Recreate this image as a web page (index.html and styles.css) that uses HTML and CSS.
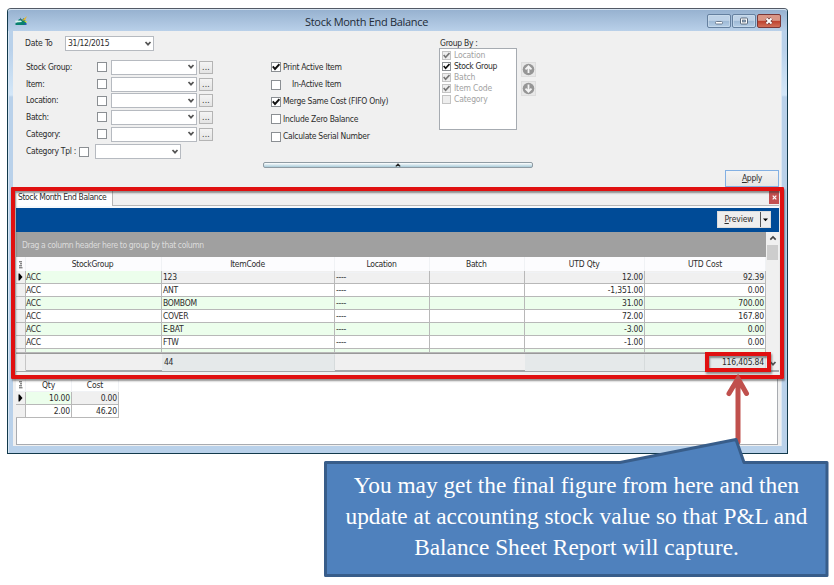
FILE: index.html
```html
<!DOCTYPE html>
<html lang="en">
<head>
<meta charset="utf-8">
<title>Stock Month End Balance</title>
<link rel="stylesheet" href="styles.css">
</head>
<body>
<svg width="0" height="0" class="defs">
  <symbol id="chev" viewBox="0 0 8 6"><path d="M1.5 1 4 3.700 6.500 1" fill="none" stroke="#555" stroke-width="1.700"/></symbol>
  <symbol id="tick" viewBox="0 0 8 8"><path d="M.8 3.4 3 6 7.4 1.2" fill="none" stroke="currentColor" stroke-width="1.9"/></symbol>
  <symbol id="cols" viewBox="0 0 5 8"><path d="M1 .8h3M2 2.800h2M1 4.800h3M1 6.800h3.500" stroke="#555" stroke-width="1"/></symbol>
  <symbol id="cur" viewBox="0 0 5 8"><path d="M.5.5h1L4.500 4l-3 3.500h-1z" fill="#000"/></symbol>
</svg>
<main class="window">
  <header class="titlebar">
    <svg class="app" viewBox="0 0 13 10"><path d="M0 8 3 5 4 3 7 4 9 2l2 4v3H1z" fill="#08806e"/><path d="M0 4.800l6-.3 1 1.500-6 .5z" fill="#d8f3ee"/><path d="M5 1.500 7 4 5.500 4z" fill="#1e4b50"/><path d="M7 4.500 12 0 10 4.500z" fill="#e8b52c"/><path d="M9 5h2.500v2z" fill="#d8dd28"/><path d="M9.500 7h2v2h-2z" fill="#285bb0"/></svg>
    <h1>Stock Month End Balance</h1>
    <div class="winbtns">
      <span class="wb"><svg viewBox="0 0 22 12"><rect x="7.5" y="6.5" width="7" height="2.500" rx="1" fill="#fff" stroke="#6c7c90"/></svg></span>
      <span class="wb"><svg viewBox="0 0 22 12"><rect x="7.5" y="3" width="7" height="6" rx="1" fill="#fff" stroke="#58687a"/><rect x="9.5" y="5" width="3" height="2" fill="#8fa7c2" stroke="#58687a" stroke-width=".7"/></svg></span>
      <span class="wb red"><svg viewBox="0 0 22 12"><path d="M8.500 3.500l5 5m0-5-5 5" stroke="#6d3a3a" stroke-width="3.400"/><path d="M8.500 3.500l5 5m0-5-5 5" stroke="#fff" stroke-width="1.900"/></svg></span>
    </div>
  </header>
  <div class="client">
    <section class="form">
      <div class="filters">
        <div class="row date"><label>Date To</label><span class="combo">31/12/2015<svg><use href="#chev"/></svg></span></div>
        <div class="row"><label>Stock Group:</label><i class="cb"></i><span class="combo"><svg><use href="#chev"/></svg></span><button>...</button></div>
        <div class="row"><label>Item:</label><i class="cb"></i><span class="combo"><svg><use href="#chev"/></svg></span><button>...</button></div>
        <div class="row"><label>Location:</label><i class="cb"></i><span class="combo"><svg><use href="#chev"/></svg></span><button>...</button></div>
        <div class="row"><label>Batch:</label><i class="cb"></i><span class="combo"><svg><use href="#chev"/></svg></span><button>...</button></div>
        <div class="row"><label>Category:</label><i class="cb"></i><span class="combo"><svg><use href="#chev"/></svg></span><button>...</button></div>
        <div class="row tpl"><label>Category Tpl :</label><i class="cb"></i><span class="combo"><svg><use href="#chev"/></svg></span></div>
      </div>
      <div class="options">
        <div class="opt"><i class="cb"><svg><use href="#tick"/></svg></i>Print Active Item</div>
        <div class="opt ina"><i class="cb"></i>In-Active Item</div>
        <div class="opt"><i class="cb"><svg><use href="#tick"/></svg></i>Merge Same Cost (FIFO Only)</div>
        <div class="opt"><i class="cb"></i>Include Zero Balance</div>
        <div class="opt"><i class="cb"></i>Calculate Serial Number</div>
      </div>
      <div class="groupby">
        <div class="gl">Group By :</div>
        <div class="list">
          <div class="gi off"><i class="cb"><svg><use href="#tick"/></svg></i>Location</div>
          <div class="gi"><i class="cb"><svg><use href="#tick"/></svg></i>Stock Group</div>
          <div class="gi off"><i class="cb"><svg><use href="#tick"/></svg></i>Batch</div>
          <div class="gi off"><i class="cb"><svg><use href="#tick"/></svg></i>Item Code</div>
          <div class="gi off"><i class="cb"></i>Category</div>
        </div>
      </div>
      <div class="movers">
        <span><svg viewBox="0 0 13 13"><circle cx="6.5" cy="6.5" r="5.8" fill="#969696"/><path d="M6.5 10V3.500M3.500 6.300l3-3 3 3" fill="none" stroke="#f4f4f4" stroke-width="1.800"/></svg></span>
        <span><svg viewBox="0 0 13 13"><circle cx="6.5" cy="6.5" r="5.8" fill="#969696"/><path d="M6.5 2.500v7M3.500 6.700l3 3 3-3" fill="none" stroke="#f4f4f4" stroke-width="1.800"/></svg></span>
      </div>
    </section>
    <div class="collapser"><svg viewBox="0 0 6 4"><path d="M.8 3.4 3 1.2 5.2 3.4" fill="none" stroke="#222" stroke-width="1.3"/></svg></div>
    <div class="applyrow"><button class="apply"><u>A</u>pply</button></div>
    <section class="report">
      <div class="tabs"><span class="tab">Stock Month End Balance</span><span class="close"><svg viewBox="0 0 5 5"><path d="M.7.7l3.6 3.6m0-3.6L.7 4.3" stroke="#fff" stroke-width="1.2"/></svg></span></div>
      <div class="bar"><button class="preview"><span><u>P</u>review</span><b><svg viewBox="0 0 6 4"><path d="M0 .3h6L3 3.6z"/></svg></b></button></div>
      <div class="gridwrap">
        <div class="gridmain">
          <div class="grouphint">Drag a column header here to group by that column</div>
          <div class="grid">
            <div class="r head"><span><svg><use href="#cols"/></svg></span><span>StockGroup</span><span>ItemCode</span><span>Location</span><span>Batch</span><span>UTD Qty</span><span>UTD Cost</span></div>
            <div class="r cur"><span><svg><use href="#cur"/></svg></span><span>ACC</span><span>123</span><span>----</span><span></span><span>12.00</span><span>92.39</span></div>
            <div class="r"><span></span><span>ACC</span><span>ANT</span><span>----</span><span></span><span>-1,351.00</span><span>0.00</span></div>
            <div class="r g"><span></span><span>ACC</span><span>BOMBOM</span><span>----</span><span></span><span>31.00</span><span>700.00</span></div>
            <div class="r"><span></span><span>ACC</span><span>COVER</span><span>----</span><span></span><span>72.00</span><span>167.80</span></div>
            <div class="r g"><span></span><span>ACC</span><span>E-BAT</span><span>----</span><span></span><span>-3.00</span><span>0.00</span></div>
            <div class="r"><span></span><span>ACC</span><span>FTW</span><span>----</span><span></span><span>-1.00</span><span>0.00</span></div>
            <div class="r g part"><span></span><span></span><span></span><span></span><span></span><span></span><span></span></div>
            <div class="r foot"><span></span><span></span><span>44</span><span></span><span></span><span></span><span>116,405.84</span></div>
          </div>
        </div>
        <div class="scroll"><svg viewBox="0 0 8 6"><path d="M1.3 4.6 4 1.9l2.7 2.7" fill="none" stroke="#444" stroke-width="1.6"/></svg><i></i><svg class="down"><use href="#chev"/></svg></div>
      </div>
    </section>
    <section class="detail">
      <div class="d dh"><span><svg><use href="#cols"/></svg></span><span>Qty</span><span>Cost</span></div>
      <div class="d dc"><span><svg><use href="#cur"/></svg></span><span>10.00</span><span>0.00</span></div>
      <div class="d"><span></span><span>2.00</span><span>46.20</span></div>
    </section>
  </div>
</main>
<div class="mark big"></div>
<div class="mark small"></div>
<svg class="annot" viewBox="0 0 834 585">
  <path d="M738 442V379M729 393.500 738 378.500l8.500 15" fill="none" stroke="#c0504d" stroke-width="5" stroke-linecap="round"/>
  <path d="M325.500 462.500H620L736 439.500 744 462.500H827V575.500H325.500z" fill="#4f81bd" stroke="#385d8a" stroke-width="3" stroke-linejoin="round"/>
</svg>
<div class="callout"><p>You may get the final figure from here and then</p><p>update at accounting stock value so that P&amp;L and</p><p>Balance Sheet Report will capture.</p></div>
</body>
</html>
```
FILE: styles.css
```css
* { box-sizing: border-box; }
body { margin: 0; width: 834px; height: 585px; position: relative; overflow: hidden; background: #fff; padding: 8px 0 0 7px; font: 8.5px/11px "DejaVu Sans Condensed", "DejaVu Sans", sans-serif; font-stretch: condensed; letter-spacing: -.28px; color: #2c2c2c; }
.defs { position: absolute; }
button { font: inherit; letter-spacing: inherit; color: inherit; padding: 0; margin: 0; }
svg { display: block; flex: none; }
.window { width: 781px; height: 446px; border: 1px solid #12394b; border-top-color: #525a66; border-radius: 4px 4px 0 0; background: linear-gradient(#b9d1ea 0 40px, #d4e7f8 86px, #b9d1ea 88px); padding: 0 5px 7px 5px; box-shadow: inset 1px 1px 0 #d9e8f6; }
.titlebar { height: 22px; margin: 0 -5px; padding: 0 6px 0 7px; display: flex; align-items: center; border-radius: 3px 3px 0 0; background: linear-gradient(#97b2d0, #b9d0e9); border-top: 1px solid #d5e3f1; }
.app { width: 13px; height: 10px; margin-top: 1px; }
.titlebar h1 { flex: 1; margin: 2px 0 0 277px; font: 400 11px/16px "Open Sans", sans-serif; letter-spacing: -.3px; white-space: nowrap; color: #222c38; }
.winbtns { display: flex; gap: 1px; }
.wb { width: 24px; height: 14px; border: 1px solid #65809f; border-radius: 2px; background: linear-gradient(#bed2e7 45%, #9db8d4 50%, #b5cee7); box-shadow: inset 0 0 0 1px #cfdfef99; }
.wb.red { border-color: #7a3838; background: linear-gradient(#d99686 45%, #bd3f2c 50%, #d1705a); box-shadow: none; }
.client { height: 415px; background: #f0f0f0; display: flex; flex-direction: column; border-right: 1px solid #dce8f4; }
.form { display: flex; height: 131px; align-items: flex-start; }
.filters { width: 258px; padding: 5px 0 0 13px; }
.row { display: flex; align-items: center; height: 16.7px; }
.row label { width: 71px; }
.row.date { height: 15px; margin: 0 0 8px -1px; }
.row.date label { width: 40px; letter-spacing: -.15px; }
.date .combo { width: 89px; height: 15.5px; margin: 0; }
.row.tpl { height: 18px; margin-top: .5px; }
.row.tpl label { width: 53px; white-space: nowrap; }
.tpl .combo { margin-left: 6px; }
.cb { width: 10px; height: 10px; border: 1px solid #8b8f93; background: #fff; flex: none; display: block; color: #111; }
.cb svg { width: 8px; height: 8px; }
.combo { display: flex; align-items: center; justify-content: flex-end; width: 86px; height: 15px; margin-left: 4px; border: 1px solid #b6bac0; background: #fff; padding: 0 1px 0 2px; }
.date .combo { justify-content: space-between; }
.combo svg { width: 8px; height: 6px; }
.row button { width: 14px; height: 13px; margin-left: 2px; border: 1px solid #b4b4b4; background: linear-gradient(#f4f4f4, #e4e4e4); line-height: 9px; letter-spacing: .2px; }
.options { width: 168px; padding: 27.5px 0 0; }
.opt { display: flex; align-items: center; height: 17.4px; gap: 2px; white-space: nowrap; }
.ina { gap: 11px; }
.groupby { width: 80px; padding-top: 6px; }
.gl { height: 11px; padding: 1px 0 0 1px; }
.list { width: 78px; height: 82px; border: 1px solid #a6abb1; background: #fff; padding: 1px 2px; }
.gi { height: 11px; display: flex; align-items: center; gap: 3px; white-space: nowrap; letter-spacing: -.35px; }
.gi .cb { width: 9px; height: 9px; }
.gi .cb svg { width: 7px; height: 7px; }
.off { color: #a2a2a2; letter-spacing: -.15px; }
.off .cb { background: #eee; border-color: #c4c4c4; color: #777; }
.movers { padding: 31px 0 0 2px; display: grid; gap: 4px; }
.movers span { width: 15px; height: 15px; border: 1px solid #ddd; background: #e8e8e8; }
.movers svg { width: 13px; height: 13px; }
.collapser { width: 270px; height: 6px; margin-left: 250px; border: 1px solid #8f9ba3; border-radius: 2px; background: linear-gradient(#fff, #a9cbd9); display: flex; justify-content: center; flex: none; }
.collapser svg { width: 6px; height: 4px; }
.applyrow { height: 20px; padding: 2px 2px 0; display: flex; justify-content: flex-end; flex: none; }
.apply { width: 54px; height: 17px; border: 1px solid #83b0e3; background: linear-gradient(#f3f3f3, #e6e6e6); }
.report { margin: 3px 2px 0 3px; height: 181px; flex: none; }
.tabs { display: flex; height: 15px; border-bottom: 1px solid #b8b8b8; justify-content: space-between; }
.tab { width: 97px; height: 15px; background: #fff; border-right: 1px solid #b5b5b5; padding: 1px 0 0 2px; white-space: nowrap; letter-spacing: -.4px; }
.close { width: 10px; height: 13px; background: #c45050; padding: 4px 3px; }
.close svg { width: 5px; height: 5px; }
.bar { height: 26px; border-top: 2px solid #f6f9fc; background: #004b97; padding: 3px 8px; display: flex; justify-content: flex-end; }
.preview { display: flex; width: 54px; height: 17px; border: 1px solid #ddd; background: #eee; align-items: stretch; line-height: 15px; letter-spacing: -.1px; }
.preview span { flex: 1; border-right: 1px solid #555; }
.preview b { width: 9px; display: flex; align-items: center; justify-content: center; }
.preview svg { width: 5px; height: 4px; }
.gridwrap { display: flex; height: 140px; border-bottom: 2px solid #a4a6a8; }
.gridmain { width: 750px; }
.grouphint { height: 25px; background: #a0a0a0; color: #dcdcdc; padding: 8px 0 0 6px; letter-spacing: -.38px; }
.r { display: grid; grid-template-columns: 10px 136px 173px 95px 94.5px 120.5px 121px; height: 13px; line-height: 12px; background: #fff; }
.r > span { border-right: 1px solid #b8b8b8; border-bottom: 1px solid #b8b8b8; padding: 0 2px 0 1px; white-space: nowrap; }
.r > span:nth-child(2) { padding-left: 0; }
.r > span:first-child, .d > span:first-child { background: #f0f0f0; padding: 2px 0 0 2px; }
.r > span:nth-child(n+6) { text-align: right; letter-spacing: -.17px; padding-right: 1px; }
.r svg, .d svg { width: 5px; height: 8px; }
.r.head { height: 14px; line-height: 15px; background: #fcfcfe; }
.r.head > span { text-align: center; border-color: #f0f2f5; }
.r.head > span:first-child { background: #fcfcfe; padding-top: 4px; }
.r.g, .r.cur > span:nth-child(2) { background: #ecfeec; }
.r.cur { background: #f0f0f0; }
.r.part { height: 4px; }
.r.foot { height: 17px; line-height: 15px; background: #f0f0f0; border-top: 1px solid #999; }
.r.foot > span { border: 1px solid transparent; }
.r.foot > span:first-child { border-right-color: #c6c6c6; }
.r.foot > span:nth-child(3), .r.foot > span:nth-child(n+6) { background: #e5e9ea; border-right-color: #d6dbdc; }
.scroll { width: 13px; background: #f0f0f0; display: flex; flex-direction: column; align-items: center; padding-top: 3px; }
.scroll svg { width: 8px; height: 6px; }
.scroll i { width: 11px; height: 15px; margin-top: 4px; background: #cdcdcd; }
.scroll .down { margin-top: auto; margin-bottom: 3px; }
.detail { margin: 7px 3px 1px; flex: 1; border: 1px solid #a8abb0; border-width: 0 1px 1px 0; background: #fff; box-shadow: inset 1px 0 #a8abb0; }
.d { display: grid; grid-template-columns: 10px 46px 47px; width: 103px; height: 13px; line-height: 12px; letter-spacing: -.17px; }
.d > span { border-right: 1px solid #b8b8b8; border-bottom: 1px solid #b8b8b8; text-align: right; padding: 0 1px; }
.dh > span { text-align: center; border-color: #f0f2f5; }
.d.dh > span:first-child { background: #fff; }
.dc > span:nth-child(2) { background: #ecfeec; }
.dc > span:nth-child(3) { background: #f0f0f0; }
.mark { position: absolute; border: 4px solid #e01010; box-shadow: 1px 2px 2px #3338, inset 1px 2px 2px #3338; }
.big { left: 11px; top: 187px; width: 773px; height: 192px; border-radius: 1px; }
.small { left: 705px; top: 352px; width: 66px; height: 20px; }
.annot { position: absolute; left: 0; top: 0; width: 834px; height: 585px; }
.callout { position: absolute; left: 325px; top: 470px; width: 503px; text-align: center; color: #fff; font: 23.35px/31px "Liberation Serif", serif; letter-spacing: 0; white-space: nowrap; }
.callout p { margin: 0; }
```
